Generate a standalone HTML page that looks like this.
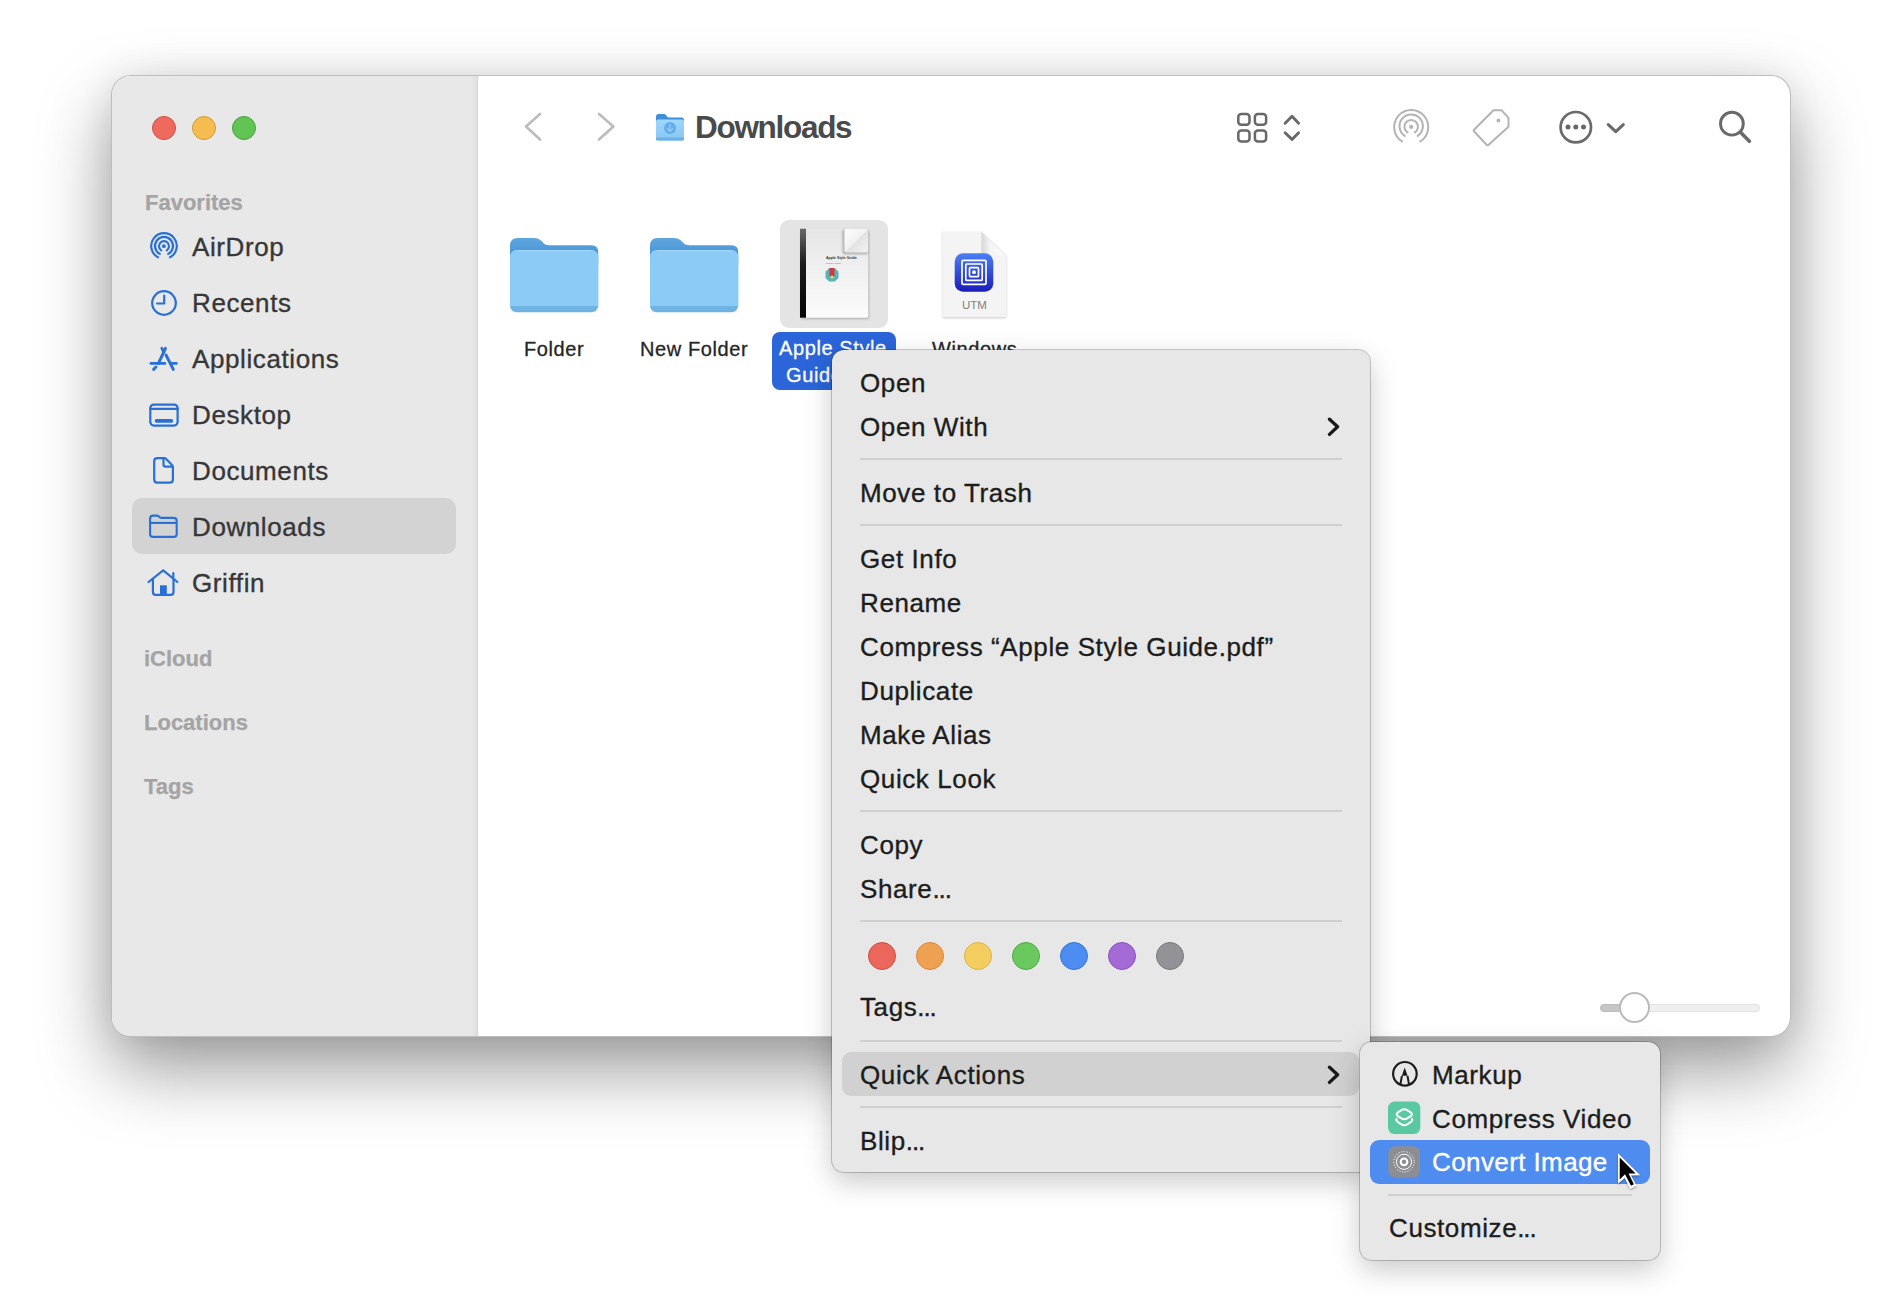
<!DOCTYPE html>
<html><head><meta charset="utf-8">
<style>
*{margin:0;padding:0;box-sizing:border-box}
html,body{width:1902px;height:1314px;overflow:hidden;background:#fff;font-family:"Liberation Sans",sans-serif}
.a{position:absolute}
.t{position:absolute;white-space:nowrap;line-height:1}
#win{position:absolute;left:111px;top:75px;width:1680px;height:962px;border-radius:20px;background:#fff;border:1px solid rgba(0,0,0,0.26);
 box-shadow:0 32px 72px rgba(0,0,0,0.40),0 0 36px rgba(0,0,0,0.07);overflow:hidden}
#side{position:absolute;left:0;top:0;width:366px;height:962px;background:#e8e8e8;border-right:1px solid #d4d4d4}
.tl{position:absolute;top:116px;width:24px;height:24px;border-radius:50%}
.fl{font-size:20px;color:#262626;letter-spacing:0.6px;-webkit-text-stroke:0.3px currentColor}
.sh{font-size:22px;font-weight:bold;color:#a4a4a4;-webkit-text-stroke:0.25px currentColor}
.si{font-size:26px;color:#373737;letter-spacing:0.6px;-webkit-text-stroke:0.35px currentColor}
.menu{position:absolute;background:#e7e7e7;border-radius:12px;box-shadow:0 0 0 1px rgba(0,0,0,0.2),0 10px 28px rgba(0,0,0,0.21)}
.mi{position:absolute;font-size:26px;color:#1d1d1d;line-height:1;white-space:nowrap;letter-spacing:0.6px;-webkit-text-stroke:0.35px currentColor}
.dot{position:absolute;top:592px;width:28px;height:28px;border-radius:50%;border:1.5px solid}
.el{letter-spacing:-1.1px}
.sep{position:absolute;height:2px;background:#cfcfcf}
</style></head><body>
<div id="win">
 <div id="side"></div>
 <div class="a" style="left:359px;top:0;width:6px;height:962px;background:linear-gradient(to right,rgba(0,0,0,0),rgba(0,0,0,0.035))"></div>
</div>
<div class="tl" style="left:152px;background:#ee6a5e;border:1px solid #cf5044"></div>
<div class="tl" style="left:192px;background:#f5bd4f;border:1px solid #d49b36"></div>
<div class="tl" style="left:232px;background:#61c454;border:1px solid #49a03e"></div>
<div class="t sh" style="left:145px;top:192px">Favorites</div>
<div class="a" style="left:132px;top:498px;width:324px;height:56px;border-radius:10px;background:#d3d3d3"></div>
<div class="t si" style="left:192px;top:234px">AirDrop</div>
<div class="t si" style="left:192px;top:290px">Recents</div>
<div class="t si" style="left:192px;top:346px">Applications</div>
<div class="t si" style="left:192px;top:402px">Desktop</div>
<div class="t si" style="left:192px;top:458px">Documents</div>
<div class="t si" style="left:192px;top:514px">Downloads</div>
<div class="t si" style="left:192px;top:570px">Griffin</div>
<div class="t sh" style="left:144px;top:648px">iCloud</div>
<div class="t sh" style="left:144px;top:712px">Locations</div>
<div class="t sh" style="left:144px;top:776px">Tags</div>
<!-- sidebar icons -->
<svg class="a" style="left:144px;top:226px" width="40" height="40" viewBox="0 0 40 40" fill="none" stroke="#2870d6" stroke-width="2.2" stroke-linecap="round">
 <path d="M14 31.3 A12.8 12.8 0 1 1 26 31.3"/><path d="M15.8 27.9 A9 9 0 1 1 24.2 27.9"/><path d="M17.2 24.3 A5 5 0 1 1 22.8 24.3"/>
 <circle cx="19.9" cy="20.2" r="1.9" fill="#2870d6" stroke="none"/></svg>
<svg class="a" style="left:144px;top:282px" width="40" height="40" viewBox="0 0 40 40" fill="none" stroke="#2870d6" stroke-width="2.2" stroke-linecap="round" stroke-linejoin="round">
 <circle cx="20" cy="21" r="11.8"/><path d="M20.2 13.5 V21.5 H13"/></svg>
<svg class="a" style="left:144px;top:340px" width="40" height="40" viewBox="0 0 40 40" fill="none" stroke="#2870d6" stroke-width="2.9" stroke-linecap="round">
 <path d="M21.5 8.3 L14.4 23.4"/><path d="M17.9 8.3 L19.8 12.2"/><path d="M22 15 L29.3 29.4"/><path d="M7 23.4 H20.8"/><path d="M26.5 23.4 H32.3"/><path d="M12 27 L9.6 29.4"/></svg>
<svg class="a" style="left:144px;top:396px" width="40" height="40" viewBox="0 0 40 40" fill="none" stroke="#2870d6" stroke-width="2.2" stroke-linecap="round">
 <rect x="6.3" y="8.6" width="27.3" height="21" rx="3.5"/><path d="M6.3 12.8 H33.6"/>
 <rect x="10.7" y="23.1" width="18.5" height="3.7" rx="1.8" fill="#2870d6" stroke="none"/></svg>
<svg class="a" style="left:144px;top:452px" width="40" height="40" viewBox="0 0 40 40" fill="none" stroke="#2870d6" stroke-width="2.2" stroke-linejoin="round">
 <path d="M13.3 6.1 H20.5 Q21.3 6.1 22 6.8 L28.2 13.2 Q28.9 14 28.9 15 V27.5 Q28.9 30.6 25.8 30.6 H13.3 Q10.2 30.6 10.2 27.5 V9.2 Q10.2 6.1 13.3 6.1 Z"/>
 <path d="M19.5 6.5 V12.6 Q19.5 14.7 21.6 14.7 H28.5"/></svg>
<svg class="a" style="left:144px;top:508px" width="40" height="40" viewBox="0 0 40 40" fill="none" stroke="#2870d6" stroke-width="2.1" stroke-linejoin="round">
 <path d="M6.1 10.6 Q6.1 7.6 9.1 7.6 H12.5 Q14 7.6 15 8.6 L16 9.5 Q16.5 9.9 17.5 9.9 H29.7 Q32.7 9.9 32.7 12.9 V25.9 Q32.7 28.9 29.7 28.9 H9.1 Q6.1 28.9 6.1 25.9 Z"/>
 <path d="M6.1 14.9 H32.7"/></svg>
<svg class="a" style="left:144px;top:564px" width="40" height="40" viewBox="0 0 40 40" fill="none" stroke="#2870d6" stroke-width="2.2" stroke-linecap="round" stroke-linejoin="round">
 <path d="M4.5 18 L19.2 6.4 L33.4 18"/><path d="M29.3 9 V14.5"/><path d="M8.9 15.5 V28 Q8.9 30.9 11.8 30.9 H26.6 Q29.5 30.9 29.5 28 V15.5"/>
 <rect x="16" y="21.3" width="6.8" height="9.5" fill="#2870d6" stroke="none"/></svg>
<!-- toolbar -->
<svg class="a" style="left:510px;top:100px" width="120" height="55" viewBox="0 0 120 55" fill="none" stroke="#bcbcbc" stroke-width="2.6" stroke-linecap="round" stroke-linejoin="round">
 <path d="M30 14 L16 26.5 L30 39.5"/><path d="M89 14 L103.4 26.5 L89 39.5"/></svg>
<svg class="a" style="left:650px;top:108px" width="40" height="38" viewBox="0 0 40 38">
 <defs><linearGradient id="tf" x1="0" y1="0" x2="0" y2="1"><stop offset="0" stop-color="#a0d6fa"/><stop offset="1" stop-color="#86c6f2"/></linearGradient></defs>
 <path d="M6 9 Q6 6 8.5 6 H14 Q15.3 6 16.2 7.2 L17 8.5 Q17.5 9.5 19 9.5 H31.5 Q34 9.5 34 12 V20 H6 Z" fill="#3d8fd8"/>
 <rect x="6" y="11.5" width="28" height="21" rx="2" fill="url(#tf)"/>
 <rect x="6" y="29.5" width="28" height="3" rx="1.2" fill="#6bb1e6"/>
 <circle cx="20" cy="20" r="6" fill="#62acea"/>
 <path d="M20 16.5 V23 M17.3 20.5 L20 23.2 L22.7 20.5" stroke="#8ccaf5" stroke-width="1.6" fill="none" stroke-linecap="round"/></svg>
<div class="t" style="left:695px;top:112px;font-size:31.5px;font-weight:bold;color:#4a4a4a;letter-spacing:-1.3px">Downloads</div>
<svg class="a" style="left:1225px;top:100px" width="90" height="55" viewBox="0 0 90 55" fill="none" stroke="#686868" stroke-width="2.5" stroke-linecap="round" stroke-linejoin="round">
 <rect x="13.3" y="14.1" width="11.2" height="10.6" rx="3"/><rect x="29.9" y="14.1" width="11.2" height="10.6" rx="3"/>
 <rect x="13.3" y="30.4" width="11.2" height="11.1" rx="3"/><rect x="29.9" y="30.4" width="11.2" height="11.1" rx="3"/>
 <path d="M60.1 23.2 L67 16.3 L73.6 23.2" stroke-width="2.9"/><path d="M60.1 32.7 L67 39.4 L73.6 32.7" stroke-width="2.9"/></svg>
<svg class="a" style="left:1380px;top:100px" width="260" height="55" viewBox="0 0 260 55" fill="none" stroke-linecap="round" stroke-linejoin="round">
 <g stroke="#b4b4b4" stroke-width="2">
 <path d="M22.1 41.4 A17 17 0 1 1 40.3 41.4"/><path d="M24.7 35.9 A11.7 11.7 0 1 1 37.7 35.9"/><path d="M27.5 32.4 A6.8 6.8 0 1 1 34.9 32.4"/>
 <path d="M113.5 10.3 H121.7 L128.5 17.8 V26.7 L108.3 45 Q107.6 45.6 106.8 45 L94 31.3 Q93.4 30.4 94 29.7 Z"/>
 </g>
 <circle cx="31.2" cy="26.9" r="2.1" fill="#b4b4b4"/><circle cx="118.4" cy="20.5" r="1.9" fill="#b4b4b4"/>
 <g stroke="#6a6a6a">
 <circle cx="195.8" cy="27.2" r="15.2" stroke-width="2.7"/>
 <path d="M228.3 24.6 L235.8 31.7 L243.3 24.6" stroke-width="3.1"/></g>
 <circle cx="188" cy="26.9" r="2.5" fill="#686868"/><circle cx="195.8" cy="26.9" r="2.5" fill="#686868"/><circle cx="203.5" cy="26.9" r="2.5" fill="#686868"/></svg>
<svg class="a" style="left:1705px;top:100px" width="60" height="55" viewBox="0 0 60 55" fill="none" stroke="#6a6a6a" stroke-linecap="round">
 <circle cx="26.9" cy="23.7" r="11.4" stroke-width="2.9"/><path d="M35.5 32.2 L44.4 41.2" stroke-width="3.6"/></svg>
<!-- files -->
<svg class="a" style="left:500px;top:225px" width="110" height="100" viewBox="0 0 110 100">
 <defs><linearGradient id="fb" x1="0" y1="0" x2="0" y2="1"><stop offset="0" stop-color="#5ea6de"/><stop offset="1" stop-color="#3f8ad3"/></linearGradient></defs>
 <path d="M10 21 Q10 13 17.5 13 H34 Q38.5 13 41.5 16 L44.5 19 Q46.5 20.3 50 20.3 H91.5 Q98.2 20.3 98.2 27 V40 H10 Z" fill="url(#fb)"/>
 <rect x="10" y="25" width="88.2" height="62.2" rx="6.5" fill="#6fb3e3"/>
 <rect x="10" y="25" width="88.2" height="56" rx="6.5" fill="#8ccbf5"/>
 <rect x="10" y="75" width="88.2" height="6" fill="#8ccbf5"/>
 <path d="M16.5 25.6 H91.7" stroke="#a3d7fa" stroke-width="1.2"/></svg>
<svg class="a" style="left:640px;top:225px" width="110" height="100" viewBox="0 0 110 100">
 <path d="M10 21 Q10 13 17.5 13 H34 Q38.5 13 41.5 16 L44.5 19 Q46.5 20.3 50 20.3 H91.5 Q98.2 20.3 98.2 27 V40 H10 Z" fill="url(#fb)"/>
 <rect x="10" y="25" width="88.2" height="62.2" rx="6.5" fill="#6fb3e3"/>
 <rect x="10" y="25" width="88.2" height="56" rx="6.5" fill="#8ccbf5"/>
 <rect x="10" y="75" width="88.2" height="6" fill="#8ccbf5"/>
 <path d="M16.5 25.6 H91.7" stroke="#a3d7fa" stroke-width="1.2"/></svg>
<div class="t fl" style="left:524px;top:339px">Folder</div>
<div class="t fl" style="left:640px;top:339px">New Folder</div>
<!-- selected doc -->
<div class="a" style="left:780px;top:220px;width:108px;height:108px;border-radius:9px;background:#e4e4e4"></div>
<svg class="a" style="left:775px;top:215px" width="120" height="120" viewBox="0 0 120 120">
 <defs><linearGradient id="pg" x1="0" y1="0" x2="0" y2="1"><stop offset="0" stop-color="#e6e6e6"/><stop offset="1" stop-color="#fcfcfc"/></linearGradient>
 <linearGradient id="sp" x1="0" y1="0" x2="0" y2="1"><stop offset="0" stop-color="#6a6a6a"/><stop offset="0.4" stop-color="#1a1a1a"/><stop offset="1" stop-color="#050505"/></linearGradient>
 <linearGradient id="fd" x1="0" y1="0" x2="1" y2="1"><stop offset="0" stop-color="#fdfdfd"/><stop offset="0.5" stop-color="#f1f1f1"/><stop offset="0.52" stop-color="#e2e2e2"/><stop offset="1" stop-color="#f3f3f3"/></linearGradient>
 <filter id="bl" x="-30%" y="-30%" width="160%" height="160%"><feGaussianBlur stdDeviation="1.3"/></filter></defs>
 <rect x="26" y="15.5" width="68" height="88.5" rx="1.5" fill="#000" opacity="0.22" filter="url(#bl)"/>
 <rect x="25" y="13.7" width="68.2" height="89" rx="1.5" fill="url(#pg)"/>
 <rect x="25" y="13.7" width="6" height="89" fill="url(#sp)"/>
 <rect x="67.5" y="14.5" width="25.5" height="24.8" rx="2" fill="#000" opacity="0.25" filter="url(#bl)"/>
 <rect x="69.4" y="13.7" width="23.8" height="23.7" rx="1.8" fill="url(#fd)"/>
 <text x="51" y="44.3" font-family="Liberation Sans" font-weight="bold" font-size="3.6" fill="#333">Apple Style Guide</text>
 <text x="51" y="48.6" font-family="Liberation Sans" font-size="2.4" fill="#777">October 2023</text>
 <path d="M54.2 53 H59.8 L63.5 56.7 V62.9 L59.8 66.6 H54.2 L50.5 62.9 V56.7 Z" fill="#56b3b8"/>
 <path d="M54.5 53 H59.5 V61 Q57 62.5 54.5 61 Z" fill="#d23a3e"/>
 <circle cx="57" cy="62" r="1.6" fill="#e9d27a"/></svg>
<div class="a" style="left:772px;top:332px;width:124px;height:58px;border-radius:8px;background:#2b65d9"></div>
<div class="t fl" style="left:779px;top:338px;color:#fff">Apple Style</div>
<div class="t fl" style="left:786px;top:364.5px;color:#fff">Guide.pdf</div>
<!-- UTM doc -->
<svg class="a" style="left:930px;top:225px" width="90" height="100" viewBox="0 0 90 100">
 <defs><linearGradient id="ub" x1="0" y1="0" x2="0" y2="1"><stop offset="0" stop-color="#4a80f4"/><stop offset="1" stop-color="#1a1cb8"/></linearGradient>
 <linearGradient id="fs" x1="0" y1="0" x2="1" y2="0"><stop offset="0" stop-color="#d6d6d6"/><stop offset="0.35" stop-color="#f4f4f4"/><stop offset="1" stop-color="#fbfbfb"/></linearGradient>
 <filter id="b2" x="-30%" y="-30%" width="160%" height="160%"><feGaussianBlur stdDeviation="0.9"/></filter></defs>
 <path d="M12.4 7.5 H51.4 L76.4 31.5 V91.8 Q76.4 93.3 74.9 93.3 H13.9 Q12.4 93.3 12.4 91.8 Z" fill="#000" opacity="0.18" filter="url(#b2)"/>
 <path d="M12.4 6.9 H51.4 L76.2 30.7 V90.5 Q76.2 92 74.7 92 H13.9 Q12.4 92 12.4 90.5 Z" fill="#f4f4f4"/>
 <path d="M51.4 6.9 L76.2 30.7 H54 Q51.4 30.7 51.4 28 Z" fill="url(#fs)"/>
 <path d="M51.4 6.9 L76.2 30.7" stroke="#e0e0e0" stroke-width="0.6"/>
 <rect x="24.7" y="28.2" width="38.6" height="38.6" rx="8.5" fill="url(#ub)"/>
 <g fill="none" stroke="#fff" stroke-width="1.7"><rect x="32" y="35.3" width="24" height="24" rx="1"/><rect x="35.8" y="39" width="16.4" height="16.4" rx="1"/><rect x="39.5" y="42.7" width="9" height="9" rx="1"/></g>
 <circle cx="44" cy="47.2" r="1.9" fill="#fff"/>
 <text x="44.5" y="84" font-family="Liberation Sans" font-size="11.5" fill="#808080" text-anchor="middle">UTM</text></svg>
<div class="t fl" style="left:932px;top:339px">Windows</div>
<!-- slider -->
<div class="a" style="left:1600px;top:1004px;width:160px;height:8px;border-radius:4px;background:#efefef;border:1px solid #e2e2e2"></div>
<div class="a" style="left:1600px;top:1004px;width:34px;height:8px;border-radius:4px;background:#c6c6c6;border:1px solid #bdbdbd"></div>
<div class="a" style="left:1618.5px;top:992px;width:31px;height:31px;border-radius:50%;background:#fff;border:2px solid #bababa"></div>

<div class="menu" style="left:832px;top:350px;width:538px;height:822px">
 <div class="mi" style="left:28px;top:20px">Open</div>
 <div class="mi" style="left:28px;top:64px">Open With</div>
 <svg class="a" style="left:493px;top:67px" width="16" height="20" viewBox="0 0 16 20"><path d="M4.5 2.2 L12.6 9.7 L4.5 17.4" fill="none" stroke="#1a1a1a" stroke-width="3.3" stroke-linecap="round" stroke-linejoin="round"/></svg>
 <div class="sep" style="left:28px;top:108px;width:482px"></div>
 <div class="mi" style="left:28px;top:130px">Move to Trash</div>
 <div class="sep" style="left:28px;top:174px;width:482px"></div>
 <div class="mi" style="left:28px;top:196px">Get Info</div>
 <div class="mi" style="left:28px;top:240px">Rename</div>
 <div class="mi" style="left:28px;top:284px">Compress “Apple Style Guide.pdf”</div>
 <div class="mi" style="left:28px;top:328px">Duplicate</div>
 <div class="mi" style="left:28px;top:372px">Make Alias</div>
 <div class="mi" style="left:28px;top:416px">Quick Look</div>
 <div class="sep" style="left:28px;top:460px;width:482px"></div>
 <div class="mi" style="left:28px;top:482px">Copy</div>
 <div class="mi" style="left:28px;top:526px">Share<span class="el">...</span></div>
 <div class="sep" style="left:28px;top:570px;width:482px"></div>
 <div class="dot" style="left:36px;background:#eb665b;border-color:#cf4b41"></div>
 <div class="dot" style="left:84px;background:#efa152;border-color:#d8863a"></div>
 <div class="dot" style="left:132px;background:#f4cd5f;border-color:#dcb444"></div>
 <div class="dot" style="left:180px;background:#6ac95e;border-color:#4fa945"></div>
 <div class="dot" style="left:228px;background:#4d8cf0;border-color:#3573d6"></div>
 <div class="dot" style="left:276px;background:#a46ad6;border-color:#8a50bd"></div>
 <div class="dot" style="left:324px;background:#939397;border-color:#79797d"></div>
 <div class="mi" style="left:28px;top:644px">Tags<span class="el">...</span></div>
 <div class="sep" style="left:28px;top:690px;width:482px"></div>
 <div class="a" style="left:10px;top:702px;width:517px;height:44px;border-radius:9px;background:#d1d1d1"></div>
 <div class="mi" style="left:28px;top:712px">Quick Actions</div>
 <svg class="a" style="left:493px;top:715px" width="16" height="20" viewBox="0 0 16 20"><path d="M4.5 2.2 L12.6 9.7 L4.5 17.4" fill="none" stroke="#1a1a1a" stroke-width="3.3" stroke-linecap="round" stroke-linejoin="round"/></svg>
 <div class="sep" style="left:28px;top:756px;width:482px"></div>
 <div class="mi" style="left:28px;top:778px">Blip<span class="el">...</span></div>
</div>
<div class="menu" style="left:1360px;top:1042px;width:300px;height:218px">
 <div class="mi" style="left:72px;top:20px">Markup</div>
 <div class="mi" style="left:72px;top:64px">Compress Video</div>
 <div class="a" style="left:10px;top:98px;width:280px;height:44px;border-radius:9px;background:#4f8cf0"></div>
 <div class="mi" style="left:72px;top:107px;color:#fff;letter-spacing:0.4px">Convert Image</div>
 <div class="sep" style="left:28px;top:152px;width:244px"></div>
 <div class="mi" style="left:29px;top:173px">Customize<span class="el">...</span></div>
</div>

<svg class="a" style="left:1380px;top:1052px" width="50" height="140" viewBox="0 0 50 140">
 <circle cx="24.9" cy="21.8" r="11.8" fill="none" stroke="#1d1d1d" stroke-width="2.2"/>
 <path d="M24.7 15.5 L21.8 23.8 H27.6 Z" fill="#1d1d1d"/>
 <path d="M21.9 23.8 L20.3 33 M27.5 23.8 L29.1 33" stroke="#1d1d1d" stroke-width="2" fill="none"/>
 <rect x="8" y="49.6" width="32.3" height="32.5" rx="6.5" fill="#5ac9a2"/>
 <path d="M27.55 58.4 L30.35 60.2 Q33.6 62.3 30.35 64.4 L27.55 66.2 Q24.3 68.3 21.05 66.2 L18.25 64.4 Q15 62.3 18.25 60.2 L21.05 58.4 Q24.3 56.3 27.55 58.4 Z" fill="none" stroke="#fff" stroke-width="2"/>
 <path d="M17.1 66.2 Q15 68.2 18.25 70.3 L21.05 72.1 Q24.3 74.2 27.55 72.1 L30.35 70.3 Q33.6 68.2 31.5 66.2" fill="none" stroke="#fff" stroke-width="2"/>
 <rect x="8.3" y="94.3" width="31.7" height="31" rx="6.5" fill="#8d8e93"/>
 <circle cx="24" cy="109.8" r="10.2" fill="none" stroke="#fff" stroke-width="1" stroke-dasharray="1.2 1.6"/>
 <circle cx="24" cy="109.8" r="7.6" fill="none" stroke="#fff" stroke-width="1"/>
 <circle cx="24" cy="109.8" r="3.3" fill="none" stroke="#fff" stroke-width="2.2"/>
</svg>
<svg class="a" style="left:1600px;top:1140px" width="60" height="60" viewBox="0 0 60 60">
 <defs><filter id="cs" x="-50%" y="-50%" width="200%" height="200%"><feGaussianBlur stdDeviation="1.2"/></filter></defs>
 <path d="M18 14.5 L18 45 L24.7 39 L30.1 50 L36.5 47 L31 36.8 L40.2 36.4 Z" fill="rgba(0,0,0,0.35)" filter="url(#cs)"/>
 <path d="M18 13.2 L18 43.8 L24.7 37.9 L30.1 48.9 L36.5 45.7 L31 35.6 L40.2 35.2 Z" fill="#fff"/>
 <path d="M19.7 17.6 L19.7 39.4 L25 34.2 L31 45.8 L33.9 44.3 L28.6 33.6 L35.6 33.4 Z" fill="#000"/>
</svg>
</body></html>
